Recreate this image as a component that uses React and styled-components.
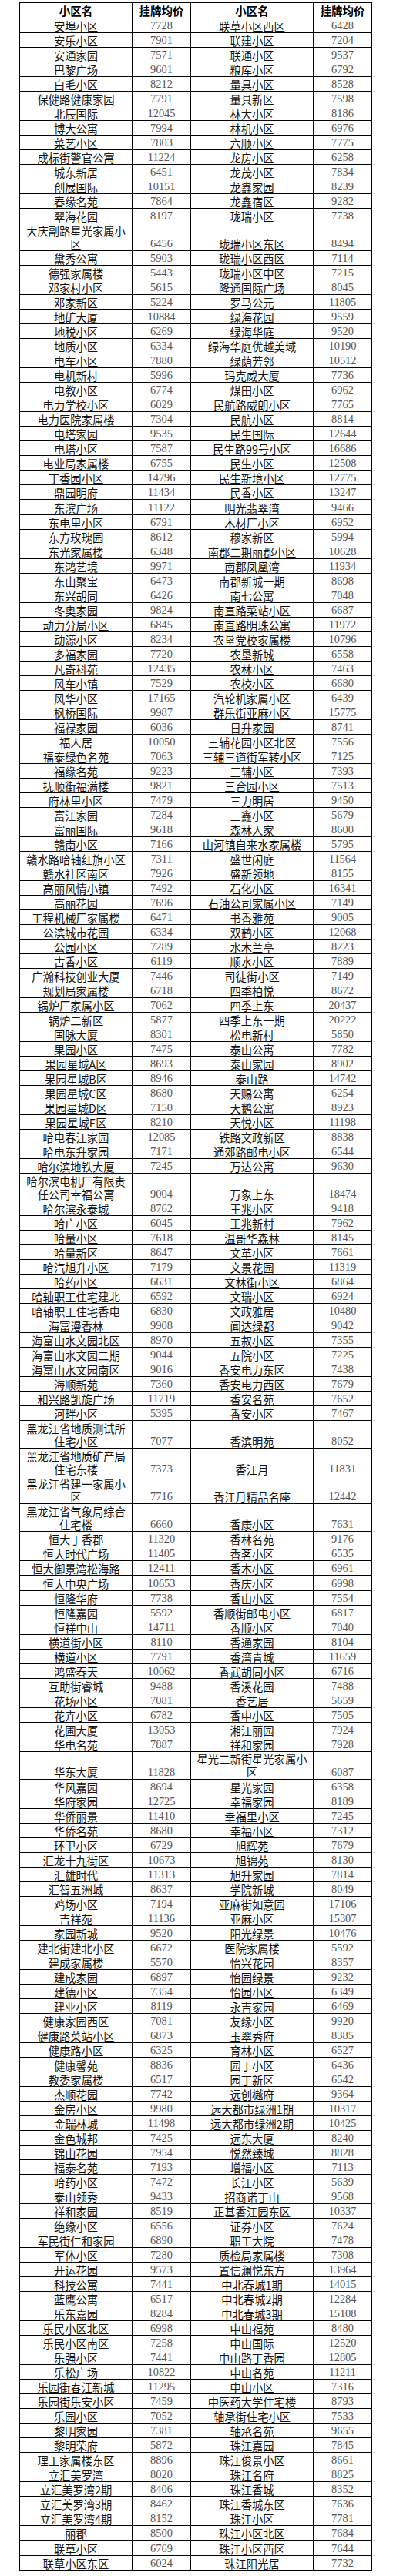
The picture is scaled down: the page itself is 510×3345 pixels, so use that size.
import React from 'react';
import styled, { createGlobalStyle } from 'styled-components';

const rows = `
安埠小区,7728,联草小区西区,6428
安乐小区,7901,联建小区,7204
安通家园,7571,联通小区,9537
巴黎广场,9601,粮库小区,6792
白毛小区,8212,量具小区,8528
保健路健康家园,7791,量具新区,7598
北辰国际,12045,林大小区,8186
博大公寓,7994,林机小区,6976
菜艺小区,7803,六顺小区,7775
成标街警官公寓,11224,龙房小区,6258
城东新居,6451,龙茂小区,7834
创展国际,10151,龙鑫家园,8239
春缘名苑,7864,龙鑫宿区,9282
翠海花园,8197,珑瑞小区,7738
大庆副路星光家属小/区,6456,珑瑞小区东区,8494
黛秀公寓,5903,珑瑞小区西区,7114
德强家属楼,5443,珑瑞小区中区,7215
邓家村小区,5615,隆通国际广场,8045
邓家新区,5224,罗马公元,11805
地矿大厦,10884,绿海花园,9559
地税小区,6269,绿海华庭,9520
地质小区,6334,绿海华庭优越美域,10190
电车小区,7880,绿荫芳邻,10512
电机新村,5996,玛克威大厦,7736
电教小区,6774,煤田小区,6962
电力学校小区,6029,民航路威朗小区,7765
电力医院家属楼,7304,民航小区,8814
电塔家园,9535,民生国际,12644
电塔小区,7587,民生路99号小区,16686
电业局家属楼,6755,民生小区,12508
丁香园小区,14796,民生新境小区,12775
鼎园明府,11434,民香小区,13247
东滨广场,11122,明光翡翠湾,9466
东电里小区,6791,木材厂小区,6952
东方玫瑰园,8612,穆家新区,5994
东光家属楼,6348,南郡二期丽郡小区,10628
东鸿艺境,9971,南郡凤凰湾,11934
东山聚宝,6473,南郡新城一期,8698
东兴胡同,6426,南七公寓,7048
冬奥家园,9824,南直路菜站小区,6687
动力分局小区,6845,南直路明珠公寓,11972
动源小区,8234,农垦党校家属楼,10796
多福家园,7720,农垦新城,6558
凡奇科苑,12435,农林小区,7463
风车小镇,7529,农校小区,6680
风华小区,17165,汽轮机家属小区,6439
枫桥国际,9987,群乐街亚麻小区,15775
福禄家园,6036,日升家园,8741
福人居,10050,三辅花园小区北区,7556
福泰绿色名苑,7063,三辅三道街军转小区,7125
福缘名苑,9223,三辅小区,7393
抚顺街福满楼,9821,三合园小区,7513
府林里小区,7479,三力明居,9450
富江家园,7284,三鑫小区,5679
富丽国际,9618,森林人家,8600
赣南小区,7166,山河镇自来水家属楼,5795
赣水路哈轴红旗小区,7311,盛世闲庭,11564
赣水社区南区,7926,盛新领地,8155
高丽风情小镇,7492,石化小区,16341
高丽花园,7696,石油公司家属小区,7149
工程机械厂家属楼,6471,书香雅苑,9005
公滨城市花园,6334,双鹤小区,12068
公园小区,7289,水木兰亭,8223
古香小区,6119,顺水小区,7889
广瀚科技创业大厦,7446,司徒街小区,7149
规划局家属楼,6718,四季柏悦,8672
锅炉厂家属小区,7062,四季上东,20437
锅炉二新区,5877,四季上东一期,20222
国脉大厦,8301,松电新村,5850
果园小区,7475,泰山公寓,7782
果园星城A区,8693,泰山家园,8902
果园星城B区,8946,泰山路,14742
果园星城C区,8680,天赐公寓,6254
果园星城D区,7150,天鹅公寓,8923
果园星城E区,8210,天悦小区,11198
哈电春江家园,12085,铁路文政新区,8838
哈电东升家园,7171,通郊路邮电小区,6544
哈尔滨地铁大厦,7245,万达公寓,9630
哈尔滨电机厂有限责/任公司幸福公寓,9004,万象上东,18474
哈尔滨永泰城,8762,王兆小区,9418
哈广小区,6045,王兆新村,7962
哈量小区,7618,温哥华森林,8145
哈量新区,8647,文革小区,7661
哈汽旭升小区,7179,文景花园,11319
哈药小区,6631,文林街小区,6864
哈轴职工住宅建北,6592,文瑞小区,6924
哈轴职工住宅香电,6830,文政雅居,10480
海富漫香林,9908,闻达绿都,9042
海富山水文园北区,8970,五叙小区,7355
海富山水文园二期,9044,五院小区,7225
海富山水文园南区,9016,香安电力东区,7438
海顺新苑,7360,香安电力西区,7679
和兴路凯旋广场,11719,香安名苑,7652
河畔小区,5395,香安小区,7467
黑龙江省地质测试所/住宅小区,7077,香滨明苑,8052
黑龙江省地质矿产局/住宅东楼,7373,香江月,11831
黑龙江省建一家属小/区,7716,香江月精品名座,12442
黑龙江省气象局综合/住宅楼,6660,香康小区,7631
恒大丁香郡,11320,香林名苑,9176
恒大时代广场,11405,香茗小区,6535
恒大御景湾松海路,12411,香木小区,6961
恒大中央广场,10653,香庆小区,6998
恒隆华府,7738,香山小区,7554
恒隆嘉园,5592,香顺街邮电小区,6817
恒祥中山,14711,香顺小区,7040
横道街小区,8110,香通家园,8104
横道小区,7791,香湾青城,11659
鸿盛春天,10062,香武胡同小区,6716
互助街睿城,9488,香溪花园,7488
花场小区,7081,香艺居,5659
花卉小区,6782,香中小区,7505
花圃大厦,13053,湘江丽园,7924
华电名苑,7887,祥和家园,7928
华东大厦,11828,星光二新街星光家属小/区,6087
华风嘉园,8694,星光家园,6358
华府家园,12725,幸福家园,8189
华侨丽景,11410,幸福里小区,7245
华侨名苑,8680,幸福小区,7312
环卫小区,6729,旭辉苑,7679
汇龙十九街区,10673,旭锦苑,8130
汇雄时代,11313,旭升家园,7814
汇智五洲城,8637,学院新城,8049
鸡场小区,7194,亚麻街如意园,17106
吉祥苑,11136,亚麻小区,15307
家园新城,9520,阳光绿景,10476
建北街建北小区,6672,医院家属楼,5592
建成家属楼,5570,怡兴花园,8357
建成家园,6897,怡园绿景,9232
建德小区,7354,怡园小区,6349
建业小区,8119,永吉家园,6469
健康家园西区,7081,友缘小区,9920
健康路菜站小区,6873,玉翠秀府,8385
健康路小区,6325,育林小区,6527
健康馨苑,8836,园丁小区,6436
教委家属楼,6517,园丁新区,6542
杰顺花园,7742,远创樾府,9364
金房小区,9980,远大都市绿洲1期,10317
金瑞林城,11498,远大都市绿洲2期,10425
金色城邦,7425,远东大厦,8240
锦山花园,7954,悦然臻城,8828
福泰名苑,7193,增福小区,7113
哈药小区,7472,长江小区,5639
泰山领秀,9433,招商诺丁山,9568
祥和家园,8519,正基香江园东区,10337
绝缘小区,6556,证券小区,7624
军民街仁和家园,6890,职工大院,7478
军体小区,7280,质检局家属楼,7308
开运花园,9573,置信澜悦东方,13964
科技公寓,7441,中北春城1期,14015
蓝鹰公寓,6517,中北春城2期,12284
乐东嘉园,8284,中北春城3期,15108
乐民小区北区,6998,中山福苑,8480
乐民小区南区,7258,中山国际,12520
乐强小区,7441,中山路丁香园,12805
乐松广场,10822,中山名苑,11211
乐园街春江新城,11295,中山小区,7316
乐园街乐安小区,7459,中医药大学住宅楼,8793
乐园小区,7052,轴承街住宅小区,7533
黎明家园,7381,轴承名苑,9655
黎明荣府,5872,珠江嘉园,7845
理工家属楼东区,8896,珠江俊景小区,8661
立汇美罗湾,8020,珠江名府,8825
立汇美罗湾2期,8406,珠江香城,8352
立汇美罗湾3期,8462,珠江香城东区,7636
立汇美罗湾4期,8152,珠江小区,7781
丽郡,8500,珠江小区北区,7684
联草小区,6769,珠江小区西区,7644
联草小区东区,6024,珠江阳光居,7732
`
  .trim()
  .split('\n')
  .map((line) => {
    const [a, ap, b, bp] = line.split(',');
    return {
      left: a.replace('/', '\n'),
      leftPrice: ap,
      right: b.replace('/', '\n'),
      rightPrice: bp,
      tall: a.includes('/') || b.includes('/'),
    };
  });

const GlobalStyle = createGlobalStyle`
  body {
    margin: 0;
    background: #fff;
  }
`;

const Page = styled.div`
  padding: 3px 0 0 25px;
`;

const Sheet = styled.div`
  display: flex;
  flex-direction: column;
  width: 458px;
  border-left: 1px solid #000;
  border-top: 1px solid #000;
  box-sizing: border-box;
`;

const Row = styled.div`
  display: grid;
  grid-template-columns: 146px 76px 159px 76px;
  height: ${(p) => (p.$head ? '20px' : p.$tall ? '36px' : '19.03px')};
  box-sizing: border-box;
  border-bottom: 1px solid #000;
`;

const Cell = styled.div`
  display: flex;
  align-items: flex-end;
  justify-content: center;
  box-sizing: border-box;
  border-right: 1px solid #000;
  text-align: center;
  white-space: pre;
  line-height: 17px;
`;

const HeadCell = styled(Cell)`
  align-items: center;
  font-family: 'Noto Sans CJK SC', sans-serif;
  font-size: 14.5px;
  font-weight: 700;
  color: #000;
`;

const NameCell = styled(Cell)`
  font-family: 'Noto Sans CJK SC', sans-serif;
  font-size: 14.3px;
  color: #111;
  line-height: ${(p) => (p.$tall ? '16.7px' : '17px')};
`;

const PriceCell = styled(Cell)`
  font-family: 'Liberation Serif', 'Times New Roman', serif;
  font-size: 14.4px;
  color: #555;
`;

export default function App() {
  return (
    <>
      <GlobalStyle />
      <Page>
        <Sheet>
          <Row $head>
            <HeadCell>小区名</HeadCell>
            <HeadCell>挂牌均价</HeadCell>
            <HeadCell>小区名</HeadCell>
            <HeadCell>挂牌均价</HeadCell>
          </Row>
          {rows.map((r, i) => (
            <Row key={i} $tall={r.tall}>
              <NameCell $tall={r.tall}>{r.left}</NameCell>
              <PriceCell>{r.leftPrice}</PriceCell>
              <NameCell $tall={r.tall}>{r.right}</NameCell>
              <PriceCell>{r.rightPrice}</PriceCell>
            </Row>
          ))}
        </Sheet>
      </Page>
    </>
  );
}
